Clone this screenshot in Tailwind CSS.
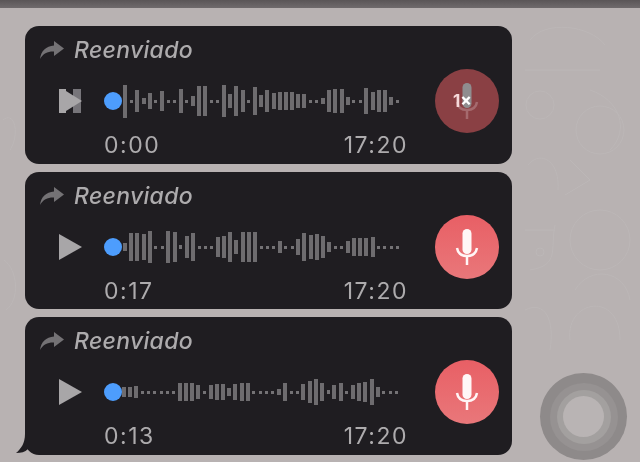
<!DOCTYPE html>
<html lang="en">
<head>
  <meta charset="UTF-8">
  <title>Reenviado</title>
  <script src="https://cdn.jsdelivr.net/npm/@tailwindcss/browser@4"></script>
</head>
<body class="bg-[#b9b3b3] overflow-hidden">
  <div class="relative w-[640px] h-[462px] overflow-hidden bg-[#b8b2b2] font-['Inter',sans-serif] blur-[0.5px]">

    <!-- faint chat wallpaper -->
    <svg width="640" height="462" viewBox="0 0 640 462" class="absolute left-0 top-0" fill="none" stroke="#bcb7b7" stroke-width="1">
      <path d="M530 40C545 20 590 25 605 45M525 70H600M590 90C620 100 630 130 610 150"/>
      <circle cx="600" cy="130" r="24"/><circle cx="540" cy="105" r="14"/>
      <path d="M528 165C540 150 560 160 558 190M570 160 590 180 565 195"/>
      <path d="M525 230H555M555 225C550 250 560 265 530 270"/>
      <circle cx="600" cy="240" r="30"/><circle cx="540" cy="252" r="4"/>
      <path d="M575 290C590 265 625 270 630 300M570 340C565 300 620 290 620 340"/>
      <path d="M525 310C545 300 555 320 550 350"/>
      <path d="M3 120C15 110 20 135 10 150M4 260C18 270 20 300 6 310"/>
    </svg>

    <!-- top edge -->
    <div class="relative h-[8px] bg-gradient-to-b from-[#5a5557] to-[#6f6a6c]"></div>

    <!-- Messages -->
    <div class="relative flex flex-col gap-[8px] pl-[25px] pt-[18px]">

      <!-- Bubble 1 -->
      <div class="w-[487px] h-[138px] pt-[11px] rounded-[14px] bg-[#1f1d21] flex flex-col">
        <div class="h-[26px] pl-[15px] flex items-center gap-[10px] text-[#adabad]">
          <svg width="24" height="18" viewBox="0 0 24 18"><path d="M14 0 24 7.5 14 15V10.5C8 10.2 3 12.5 0 18 1 10 6 5 14 4.5Z" fill="#747275"/></svg>
          <span class="text-[23px] italic font-medium leading-none tracking-[0.3px]">Reenviado</span>
        </div>
        <div class="h-[64px] mt-[6px] pl-[34px] flex items-center">
          <svg width="24" height="24" viewBox="0 0 24 24" class="shrink-0"><path d="M0 0H7V24H0Z" fill="#a8a6a8"/><path d="M14 0H22V24H14Z" fill="#77757a"/><path d="M7 2 23 12 7 22Z" fill="#a8a6a8"/></svg>
          <div class="ml-[21px] w-[18px] h-[18px] rounded-full bg-[#4d9dfd] shrink-0"></div>
          <div class="wave ml-[1px] h-[36px] flex items-center gap-[2.2px]" data-bars="33,3,22,6,16,3,20,3,3,24,3,10,30,30,3,3,32,14,30,22,3,28,12,22,16,18,18,18,14,14,3,3,6,22,24,24,8,3,3,26,18,22,22,8,3"></div>
          <div class="relative ml-auto mr-[13px] w-[64px] h-[64px] rounded-full bg-[#8a4044] flex items-center justify-center shrink-0">
            <svg width="64" height="64" viewBox="0 0 64 64"><rect x="27.5" y="14" width="9" height="25" rx="4.5" fill="#8f8d8f"/><path d="M22 33C23 39 27 41 32 41 37 41 41 39 42 33" fill="none" stroke="#a56a6e" stroke-width="2.5"/><path d="M32 41V50" stroke="#a56a6e" stroke-width="2.5"/></svg>
            <span class="absolute left-[18px] top-[22px] text-[17px] leading-[20px] font-bold text-[#f6d9da]">1<span class="text-white">×</span></span>
          </div>
        </div>
        <div class="h-[26px] -mt-[1px] pl-[79px] pr-[104px] flex items-center justify-between text-[23px] leading-none text-[#adabad] tracking-[1.5px]">
          <span>0:00</span>
          <span>17:20</span>
        </div>
      </div>

      <!-- Bubble 2 -->
      <div class="w-[487px] h-[137px] pt-[11px] rounded-[14px] bg-[#1f1d21] flex flex-col">
        <div class="h-[26px] pl-[15px] flex items-center gap-[10px] text-[#adabad]">
          <svg width="24" height="18" viewBox="0 0 24 18"><path d="M14 0 24 7.5 14 15V10.5C8 10.2 3 12.5 0 18 1 10 6 5 14 4.5Z" fill="#747275"/></svg>
          <span class="text-[23px] italic font-medium leading-none tracking-[0.3px]">Reenviado</span>
        </div>
        <div class="h-[64px] mt-[6px] pl-[34px] flex items-center">
          <svg width="24" height="26" viewBox="0 0 24 26" class="shrink-0"><path d="M0 0 23 13 0 26Z" fill="#a8a6a8"/></svg>
          <div class="ml-[21px] w-[18px] h-[18px] rounded-full bg-[#4d9dfd] shrink-0"></div>
          <div class="wave ml-[1px] h-[36px] flex items-center gap-[2.2px]" data-bars="8,28,28,26,32,3,3,32,30,4,22,28,3,3,3,20,22,30,14,30,30,30,3,3,3,12,3,3,16,28,24,26,22,10,3,3,12,18,18,18,20,3,3,3,3"></div>
          <div class="ml-auto mr-[13px] w-[64px] h-[64px] rounded-full bg-gradient-to-b from-[#e85f65] to-[#e9777a] shrink-0">
            <svg width="64" height="64" viewBox="0 0 64 64"><rect x="27.5" y="14" width="9" height="25" rx="4.5" fill="#fff6f6"/><path d="M22 33C23 39 27 41 32 41 37 41 41 39 42 33" fill="none" stroke="#fff6f6" stroke-width="2.5"/><path d="M32 41V50" stroke="#fff6f6" stroke-width="2.5"/></svg>
          </div>
        </div>
        <div class="h-[26px] -mt-[1px] pl-[79px] pr-[104px] flex items-center justify-between text-[23px] leading-none text-[#adabad] tracking-[1.5px]">
          <span>0:17</span>
          <span>17:20</span>
        </div>
      </div>

      <!-- Bubble 3 -->
      <div class="relative w-[487px] h-[138px] pt-[11px] rounded-[14px] bg-[#1f1d21] flex flex-col">
        <svg width="24" height="20" viewBox="0 0 24 20" class="absolute left-[-9px] bottom-[1px]"><path d="M9 0C9 9 5 15 0 19 5 19 9 18 12 15 15 17 19 19 24 20V0Z" fill="#1f1d21"/></svg>
        <div class="relative h-[26px] pl-[15px] flex items-center gap-[10px] text-[#adabad]">
          <svg width="24" height="18" viewBox="0 0 24 18"><path d="M14 0 24 7.5 14 15V10.5C8 10.2 3 12.5 0 18 1 10 6 5 14 4.5Z" fill="#747275"/></svg>
          <span class="text-[23px] italic font-medium leading-none tracking-[0.3px]">Reenviado</span>
        </div>
        <div class="relative h-[64px] mt-[6px] pl-[34px] flex items-center">
          <svg width="24" height="26" viewBox="0 0 24 26" class="shrink-0"><path d="M0 0 23 13 0 26Z" fill="#a8a6a8"/></svg>
          <div class="ml-[21px] w-[18px] h-[18px] rounded-full bg-[#4d9dfd] shrink-0"></div>
          <div class="wave h-[36px] flex items-center gap-[2.2px]" data-bars="10,10,12,3,3,3,3,3,3,18,18,18,14,3,14,16,16,8,16,18,18,3,3,3,3,6,18,3,3,16,22,26,18,4,14,18,3,14,18,20,26,10,3,3,3"></div>
          <div class="ml-auto mr-[13px] w-[64px] h-[64px] rounded-full bg-gradient-to-b from-[#e85f65] to-[#e9777a] shrink-0">
            <svg width="64" height="64" viewBox="0 0 64 64"><rect x="27.5" y="14" width="9" height="25" rx="4.5" fill="#fff6f6"/><path d="M22 33C23 39 27 41 32 41 37 41 41 39 42 33" fill="none" stroke="#fff6f6" stroke-width="2.5"/><path d="M32 41V50" stroke="#fff6f6" stroke-width="2.5"/></svg>
          </div>
        </div>
        <div class="relative h-[26px] -mt-[1px] pl-[79px] pr-[104px] flex items-center justify-between text-[23px] leading-none text-[#adabad] tracking-[1.5px]">
          <span>0:13</span>
          <span>17:20</span>
        </div>
      </div>
    </div>

    <!-- Floating record button -->
    <div class="absolute left-[540px] top-[373px] w-[87px] h-[87px] rounded-full bg-[#8e8a8a] flex items-center justify-center">
      <div class="w-[68px] h-[68px] rounded-full bg-[#969292] flex items-center justify-center">
        <div class="w-[54px] h-[54px] rounded-full bg-[#a3a09f] flex items-center justify-center">
          <div class="w-[41px] h-[41px] rounded-full bg-[#b9b4b4]"></div>
        </div>
      </div>
    </div>
  </div>

  <script>
    // waveform bars from their heights, silent parts are small dots
    document.querySelectorAll(".wave").forEach(wave => {
      wave.dataset.bars.split(",").forEach(h => {
        const bar = document.createElement("div");
        bar.className = h > 4 ? "w-[4px] bg-[#6e6c6f] shrink-0" : "w-[3px] mx-[0.5px] bg-[#747275] shrink-0";
        bar.style.height = h + "px";
        wave.appendChild(bar);
      });
    });
  </script>
</body>
</html>
